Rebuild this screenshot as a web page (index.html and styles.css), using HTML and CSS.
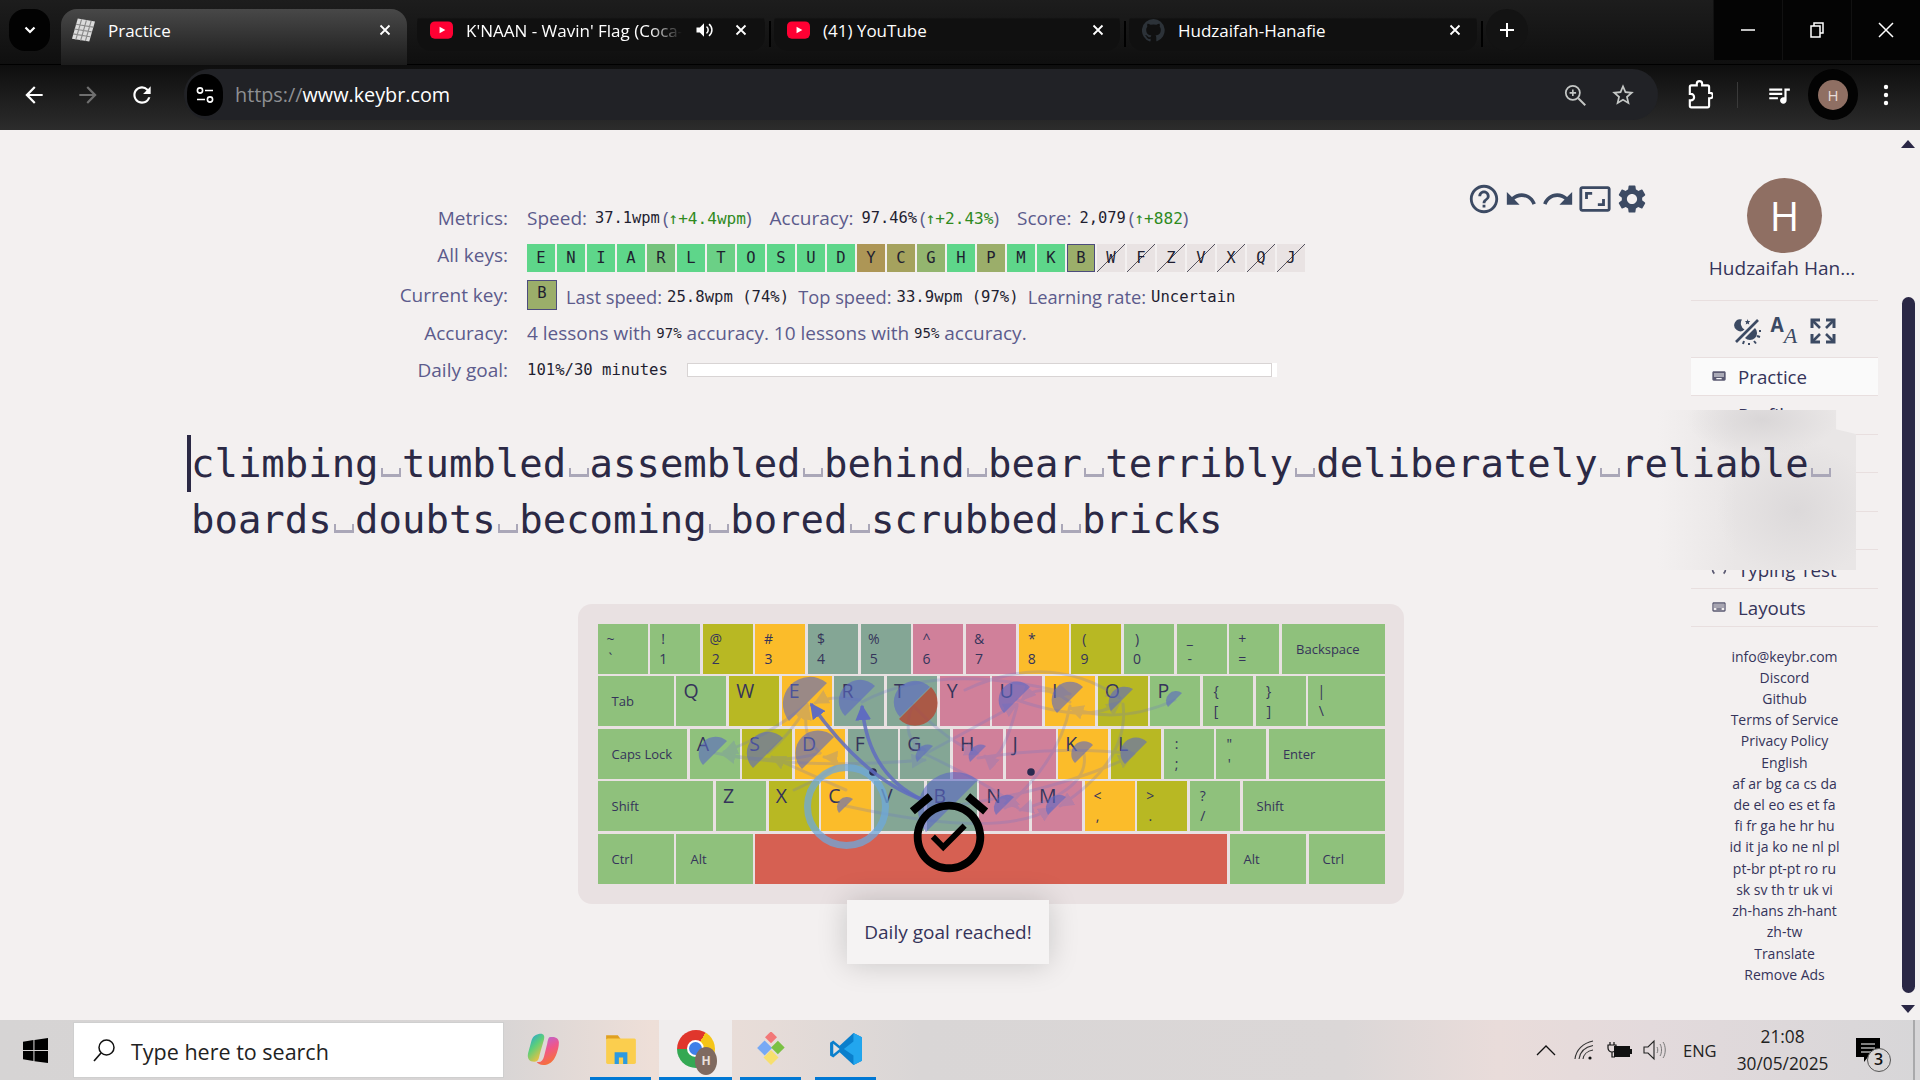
FILE: index.html
```html
<!DOCTYPE html>
<html lang="en">
<head>
<meta charset="utf-8">
<title>Practice</title>
<link rel="stylesheet" href="styles.css">
</head>
<body>
<svg class="defs" width="0" height="0"><defs>
  <marker id="ah" viewBox="0 0 10 10" refX="9" refY="5" markerWidth="5" markerHeight="5" orient="auto-start-reverse"><path d="M0 0L10 5L0 10z" fill="#6a74c8"/></marker>
  <marker id="as" viewBox="0 0 10 10" refX="9" refY="5" markerWidth="4.500" markerHeight="4.500" orient="auto-start-reverse"><path d="M0 0L10 5L0 10z" fill="#5f6cc0"/></marker>
  <linearGradient id="cop" x1="0" y1="0" x2=".6" y2="1"><stop offset="0" stop-color="#1e9be8"/><stop offset=".5" stop-color="#5ccf7a"/><stop offset="1" stop-color="#f4c03d"/></linearGradient>
  <linearGradient id="cop2" x1="0" y1="0" x2=".4" y2="1"><stop offset="0" stop-color="#a86be8"/><stop offset=".55" stop-color="#f0568a"/><stop offset="1" stop-color="#f5703c"/></linearGradient>
</defs></svg>

<header class="chrome">
  <div class="tabstrip">
    <div class="caret"><svg width="16" height="16" viewBox="0 0 16 16"><path d="M3.500 5.500L8 10l4.500-4.500" fill="none" stroke="#fff" stroke-width="2.200"/></svg></div>
    <div class="tab active">
      <svg class="fav" viewBox="0 0 24 24"><path d="M6 0L24 3L18 24L0 21z" fill="#dcdcdc"/><path d="M10 1L4 22M15 2L9 23M20 2.500L14 23.500M4 6L22 9M2.500 11L20.500 14M1 16L19 19" stroke="#8a8a8a" stroke-width="1.200"/></svg>
      <span class="tab-title">Practice</span>
      <svg class="x" viewBox="0 0 12 12"><path d="M1.500 1.500l9 9M10.500 1.500l-9 9" stroke="#fff" stroke-width="1.800"/></svg>
    </div>
    <div class="tab">
      <svg class="fav" viewBox="0 0 24 24"><rect y="3" width="24" height="18" rx="5" fill="#ff0033"/><path d="M10 8.500l6 3.500-6 3.500z" fill="#fff"/></svg>
      <span class="tab-title fade">K'NAAN - Wavin' Flag (Coca-Cola)</span>
      <svg class="spk" viewBox="0 0 24 24"><path d="M3 9v6h4l5 5V4L7 9z" fill="#fff"/><path d="M15 8c1.500 1 2 2.500 2 4s-.500 3-2 4M18 5c2.500 2 3.500 4.500 3.500 7s-1 5-3.500 7" fill="none" stroke="#fff" stroke-width="1.800"/></svg>
      <svg class="x" viewBox="0 0 12 12"><path d="M1.500 1.500l9 9M10.500 1.500l-9 9" stroke="#fff" stroke-width="1.800"/></svg>
    </div>
    <i class="sep"></i>
    <div class="tab">
      <svg class="fav" viewBox="0 0 24 24"><rect y="3" width="24" height="18" rx="5" fill="#ff0033"/><path d="M10 8.500l6 3.500-6 3.500z" fill="#fff"/></svg>
      <span class="tab-title">(41) YouTube</span>
      <svg class="x" viewBox="0 0 12 12"><path d="M1.500 1.500l9 9M10.500 1.500l-9 9" stroke="#fff" stroke-width="1.800"/></svg>
    </div>
    <i class="sep"></i>
    <div class="tab">
      <svg class="fav" viewBox="0 0 24 24"><path d="M12 .5a12 12 0 0 0-3.800 23.400c.6.100.8-.300.8-.600v-2.100c-3.300.700-4-1.600-4-1.600-.600-1.400-1.400-1.800-1.400-1.800-1.100-.700.100-.700.100-.700 1.200.100 1.900 1.200 1.900 1.200 1.100 1.800 2.800 1.300 3.500 1 .100-.800.400-1.300.800-1.600-2.700-.300-5.500-1.300-5.500-5.900 0-1.300.500-2.400 1.200-3.200-.100-.300-.500-1.500.100-3.200 0 0 1-.300 3.300 1.200a11.500 11.500 0 0 1 6 0c2.300-1.500 3.300-1.200 3.300-1.200.700 1.700.200 2.900.100 3.200.800.800 1.200 1.900 1.200 3.200 0 4.600-2.800 5.600-5.500 5.900.400.400.800 1.100.800 2.200v3.300c0 .300.200.700.800.600A12 12 0 0 0 12 .5z" fill="#2c3238"/></svg>
      <span class="tab-title">Hudzaifah-Hanafie</span>
      <svg class="x" viewBox="0 0 12 12"><path d="M1.500 1.500l9 9M10.500 1.500l-9 9" stroke="#fff" stroke-width="1.800"/></svg>
    </div>
    <i class="sep"></i>
    <div class="plus"><svg width="18" height="18" viewBox="0 0 18 18"><path d="M9 2v14M2 9h14" stroke="#fff" stroke-width="2"/></svg></div>
    <div class="winctl">
      <div class="wbtn"><svg width="14" height="14" viewBox="0 0 14 14"><path d="M0 7h14" stroke="#fff" stroke-width="1.500"/></svg></div>
      <div class="wbtn"><svg width="14" height="16" viewBox="0 0 14 16"><path d="M1 4h9v11H1zM4 4V1h9v10h-3" fill="none" stroke="#fff" stroke-width="1.500"/></svg></div>
      <div class="wbtn"><svg width="16" height="16" viewBox="0 0 16 16"><path d="M1 1l14 14M15 1L1 15" stroke="#fff" stroke-width="1.500"/></svg></div>
    </div>
  </div>
  <div class="toolbar">
    <svg class="tb back" viewBox="0 0 24 24"><path d="M20 11H7.830l5.590-5.590L12 4l-8 8 8 8 1.410-1.410L7.830 13H20v-2z" fill="#fff"/></svg>
    <svg class="tb fwd" viewBox="0 0 24 24"><path d="M12 4l-1.410 1.410L16.170 11H4v2h12.170l-5.580 5.590L12 20l8-8z" fill="#6f6f6f"/></svg>
    <svg class="tb reload" viewBox="0 0 24 24"><path d="M17.650 6.350A7.958 7.958 0 0 0 12 4c-4.420 0-7.990 3.580-7.990 8s3.570 8 7.990 8c3.730 0 6.840-2.550 7.730-6h-2.080A5.990 5.990 0 0 1 12 18c-3.310 0-6-2.690-6-6s2.690-6 6-6c1.660 0 3.140.690 4.220 1.780L13 11h7V4l-2.350 2.350z" fill="#fff"/></svg>
    <div class="omni">
      <div class="lock"><svg width="20" height="20" viewBox="0 0 20 20"><circle cx="5" cy="5.500" r="2.600" fill="none" stroke="#fff" stroke-width="1.600"/><path d="M10 5.500h8M2 14.500h8" stroke="#fff" stroke-width="1.600"/><circle cx="15" cy="14.500" r="2.600" fill="none" stroke="#fff" stroke-width="1.600"/></svg></div>
      <span class="url"><span class="url-dim">https://</span>www.keybr.com</span>
      <span class="omni-space"></span>
      <svg class="om-ic" viewBox="0 0 24 24"><circle cx="10" cy="10" r="6.500" fill="none" stroke="#c4c7c5" stroke-width="1.600"/><path d="M15 15l6.500 6.500" stroke="#c4c7c5" stroke-width="1.800"/><path d="M10 7v6M7 10h6" stroke="#c4c7c5" stroke-width="1.500"/></svg>
      <svg class="om-ic star" viewBox="0 0 24 24"><path d="M22 9.240l-7.190-.620L12 2 9.190 8.630 2 9.240l5.460 4.730L5.820 21 12 17.270 18.180 21l-1.630-7.030L22 9.240zM12 15.400l-3.760 2.270 1-4.280-3.320-2.880 4.380-.380L12 6.100l1.710 4.040 4.380.380-3.320 2.880 1 4.280L12 15.400z" fill="#c4c7c5"/></svg>
    </div>
    <svg class="ext" viewBox="0 0 24 28"><path d="M4 5h5V3.500a2.500 2.500 0 0 1 5 0V5h5a1.500 1.500 0 0 1 1.500 1.500V12h1a2.500 2.500 0 0 1 0 5h-1v7a1.500 1.500 0 0 1-1.500 1.500H4A1.500 1.500 0 0 1 2.500 24v-5h1a3 3 0 0 0 0-6h-1V6.500A1.500 1.500 0 0 1 4 5z" fill="none" stroke="#fff" stroke-width="2"/></svg>
    <i class="tb-div"></i>
    <svg class="media" viewBox="0 0 24 24"><path d="M15 6H3v2h12V6zm0 4H3v2h12v-2zM3 16h8v-2H3v2zM17 6v8.180c-.310-.110-.650-.180-1-.180-1.660 0-3 1.340-3 3s1.340 3 3 3 3-1.340 3-3V8h3V6h-5z" fill="#fff"/></svg>
    <div class="profile"><span class="profile-h">H</span></div>
    <svg class="dots" viewBox="0 0 6 24"><circle cx="3" cy="4" r="2.200" fill="#fff"/><circle cx="3" cy="12" r="2.200" fill="#fff"/><circle cx="3" cy="20" r="2.200" fill="#fff"/></svg>
  </div>
</header>

<div class="page">
  <main class="main">
    <div class="top">
      <div class="metrics">
        <div class="row"><span class="lbl">Metrics:</span>
          <div class="val"><span class="name">Speed:</span><b class="mono v1">37.1wpm</b><span class="par">(<b class="mono up">↑+4.4wpm</b>)</span><span class="name n2">Accuracy:</span><b class="mono v1">97.46%</b><span class="par">(<b class="mono up">↑+2.43%</b>)</span><span class="name n2">Score:</span><b class="mono v1">2,079</b><span class="par">(<b class="mono up">↑+882</b>)</span></div>
        </div>
        <div class="row"><span class="lbl">All keys:</span>
          <div class="val chips">
            <span class="chip c1">E</span><span class="chip c1">N</span><span class="chip c1">I</span><span class="chip c1">A</span><span class="chip c2">R</span><span class="chip c1">L</span><span class="chip c3">T</span><span class="chip c1">O</span><span class="chip c1">S</span><span class="chip c1">U</span><span class="chip c1">D</span><span class="chip c4">Y</span><span class="chip c5">C</span><span class="chip c6">G</span><span class="chip c1">H</span><span class="chip c7">P</span><span class="chip c1">M</span><span class="chip c1">K</span><span class="chip c7 cur">B</span><span class="chip off">W</span><span class="chip off">F</span><span class="chip off">Z</span><span class="chip off">V</span><span class="chip off">X</span><span class="chip off">Q</span><span class="chip off">J</span>
          </div>
        </div>
        <div class="row row-cur"><span class="lbl">Current key:</span>
          <div class="val"><span class="curkey">B</span><span class="name lift">Last speed:</span><b class="mono v2 lift">25.8wpm (74%)</b><span class="name n3 lift">Top speed:</span><b class="mono v2 lift">33.9wpm (97%)</b><span class="name n3 lift">Learning rate:</span><b class="mono v2 lift">Uncertain</b></div>
        </div>
        <div class="row"><span class="lbl">Accuracy:</span>
          <div class="val acc">4 lessons with <b class="mono sm">97%</b> accuracy. 10 lessons with <b class="mono sm">95%</b> accuracy.</div>
        </div>
        <div class="row"><span class="lbl">Daily goal:</span>
          <div class="val"><b class="mono goal">101%/30 minutes</b><span class="bar"></span><span class="bar-end"></span></div>
        </div>
      </div>
      <div class="tools">
        <svg class="t-ic" viewBox="0 0 24 24"><path d="M11 18h2v-2h-2v2zm1-16C6.480 2 2 6.480 2 12s4.480 10 10 10 10-4.480 10-10S17.520 2 12 2zm0 18c-4.410 0-8-3.590-8-8s3.590-8 8-8 8 3.590 8 8-3.590 8-8 8zm0-14c-2.210 0-4 1.790-4 4h2c0-1.100.900-2 2-2s2 .900 2 2c0 2-3 1.750-3 5h2c0-2.250 3-2.500 3-5 0-2.210-1.790-4-4-4z"/></svg>
        <svg class="t-ic" viewBox="0 0 24 24"><path d="M12.500 8c-2.650 0-5.050.990-6.900 2.600L2 7v9h9l-3.620-3.620c1.390-1.160 3.160-1.880 5.120-1.880 3.540 0 6.550 2.310 7.600 5.500l2.370-.780C21.080 11.030 17.150 8 12.500 8z"/></svg>
        <svg class="t-ic" viewBox="0 0 24 24"><path d="M18.400 10.600C16.550 8.990 14.150 8 11.500 8c-4.650 0-8.580 3.030-9.960 7.220L3.900 16c1.050-3.190 4.050-5.500 7.600-5.500 1.950 0 3.730.720 5.120 1.880L13 16h9V7l-3.600 3.600z"/></svg>
        <svg class="t-ic" viewBox="0 0 24 24"><path d="M19 12h-2v3h-3v2h5v-5zM7 9h3V7H5v5h2V9zm14-6H3c-1.100 0-2 .900-2 2v14c0 1.100.900 2 2 2h18c1.100 0 2-.900 2-2V5c0-1.100-.900-2-2-2zm0 16.010H3V4.990h18v14.020z"/></svg>
        <svg class="t-ic" viewBox="0 0 24 24"><path d="M19.140 12.940c.040-.300.060-.610.060-.940 0-.320-.020-.640-.070-.940l2.030-1.580a.49.49 0 0 0 .120-.610l-1.920-3.320a.488.488 0 0 0-.590-.220l-2.390.960c-.500-.380-1.030-.700-1.620-.940l-.360-2.540a.484.484 0 0 0-.480-.410h-3.840c-.240 0-.430.170-.470.410l-.360 2.540c-.590.240-1.130.570-1.620.940l-2.390-.960c-.220-.080-.470 0-.590.220L2.740 8.870c-.120.210-.080.470.120.610l2.030 1.580c-.050.300-.090.630-.090.940s.020.640.070.940l-2.030 1.580a.49.49 0 0 0-.120.610l1.920 3.320c.120.220.370.290.590.220l2.390-.960c.500.380 1.030.700 1.620.940l.360 2.540c.050.240.240.410.48.410h3.840c.240 0 .440-.170.470-.410l.360-2.540c.590-.240 1.130-.560 1.620-.940l2.390.960c.220.080.470 0 .590-.220l1.920-3.320c.120-.220.070-.470-.120-.610l-2.010-1.580zM12 15.600c-1.980 0-3.600-1.620-3.600-3.600s1.620-3.600 3.600-3.600 3.600 1.620 3.600 3.600-1.620 3.600-3.600 3.600z"/></svg>
      </div>
    </div>

    <div class="board">
      <i class="cursor"></i>
      <div class="board-text">climbing<span class="sp"> </span>tumbled<span class="sp"> </span>assembled<span class="sp"> </span>behind<span class="sp"> </span>bear<span class="sp"> </span>terribly<span class="sp"> </span>deliberately<span class="sp"> </span>reliable<span class="sp"> </span><br>boards<span class="sp"> </span>doubts<span class="sp"> </span>becoming<span class="sp"> </span>bored<span class="sp"> </span>scrubbed<span class="sp"> </span>bricks</div>
    </div>

    <div class="kbd">
      <div class="krow">
        <div class="k g sym"><span>~</span><span>`</span></div><div class="k g sym"><span>!</span><span>1</span></div><div class="k o sym"><span>@</span><span>2</span></div><div class="k y sym"><span>#</span><span>3</span></div><div class="k t sym"><span>$</span><span>4</span></div><div class="k t sym"><span>%</span><span>5</span></div><div class="k p sym"><span>^</span><span>6</span></div><div class="k p sym"><span>&amp;</span><span>7</span></div><div class="k y sym"><span>*</span><span>8</span></div><div class="k o sym"><span>(</span><span>9</span></div><div class="k g sym"><span>)</span><span>0</span></div><div class="k g sym"><span>_</span><span>-</span></div><div class="k g sym"><span>+</span><span>=</span></div><div class="k g fn u200">Backspace</div>
      </div>
      <div class="krow">
        <div class="k g fn u150">Tab</div><div class="k g let">Q</div><div class="k o let">W</div><div class="k y let">E</div><div class="k t let">R</div><div class="k t let">T</div><div class="k p let">Y</div><div class="k p let">U</div><div class="k y let">I</div><div class="k o let">O</div><div class="k g let">P</div><div class="k g sym"><span>{</span><span>[</span></div><div class="k g sym"><span>}</span><span>]</span></div><div class="k g sym u150"><span>|</span><span>\</span></div>
      </div>
      <div class="krow">
        <div class="k g fn u175">Caps Lock</div><div class="k g let">A</div><div class="k o let">S</div><div class="k y let">D</div><div class="k t let">F</div><div class="k t let">G</div><div class="k p let">H</div><div class="k p let">J</div><div class="k y let">K</div><div class="k o let">L</div><div class="k g sym"><span>:</span><span>;</span></div><div class="k g sym"><span>"</span><span>'</span></div><div class="k g fn u225">Enter</div>
      </div>
      <div class="krow">
        <div class="k g fn u225">Shift</div><div class="k g let">Z</div><div class="k o let">X</div><div class="k y let">C</div><div class="k t let">V</div><div class="k t let">B</div><div class="k p let">N</div><div class="k p let">M</div><div class="k y sym"><span>&lt;</span><span>,</span></div><div class="k o sym"><span>&gt;</span><span>.</span></div><div class="k g sym"><span>?</span><span>/</span></div><div class="k g fn u275">Shift</div>
      </div>
      <div class="krow">
        <div class="k g fn u150">Ctrl</div><div class="k g fn u150">Alt</div><div class="k r u900"></div><div class="k g fn u150">Alt</div><div class="k g fn u150">Ctrl</div>
      </div>

      <svg class="heat" viewBox="578 604 826 300" width="826" height="300">
        <g fill="none" stroke="#6a74c8" stroke-width="3" opacity=".24" stroke-linecap="round">
          <path marker-end="url(#ah)" d="M768 753Q790 735 807 706"/>
          <path marker-end="url(#ah)" d="M820 753Q800 735 808 706"/>
          <path marker-end="url(#ah)" d="M820 753Q780 765 722 754"/>
          <path marker-end="url(#ah)" d="M807 704Q770 735 724 752"/>
          <path marker-end="url(#ah)" d="M846 790Q800 770 772 757"/>
          <path marker-end="url(#ah)" d="M794 790Q860 760 824 757"/>
          <path marker-end="url(#ah)" d="M860 700Q830 695 815 703"/>
          <path marker-end="url(#ah)" d="M912 704Q945 740 978 754"/>
          <path marker-end="url(#ah)" d="M925 754Q960 735 1017 704"/>
          <path marker-end="url(#ah)" d="M1070 702Q1040 680 1022 700"/>
          <path marker-end="url(#ah)" d="M862 702Q940 660 1070 694"/>
          <path marker-end="url(#ah)" d="M1017 700Q1090 725 1120 702"/>
          <path marker-end="url(#ah)" d="M1175 700Q1120 725 1070 708"/>
          <path marker-end="url(#ah)" d="M978 758Q1060 745 1134 754"/>
          <path marker-end="url(#ah)" d="M952 806Q1060 790 1132 756"/>
          <path marker-end="url(#ah)" d="M925 754Q1000 790 1018 808"/>
          <path marker-end="url(#ah)" d="M1084 754Q1090 790 1020 810"/>
          <path marker-end="url(#ah)" d="M1123 704Q1130 760 1060 806"/>
          <path marker-end="url(#ah)" d="M1070 706Q1060 760 1005 808"/>
          <path marker-end="url(#ah)" d="M912 706Q900 740 925 750"/>
          <path marker-end="url(#ah)" d="M1017 706Q1000 770 985 756"/>
          <path marker-end="url(#ah)" d="M846 806Q1000 840 1052 808"/>
          <path marker-end="url(#ah)" d="M715 753Q800 770 925 760"/>
          <path marker-end="url(#ah)" d="M965 690Q1050 650 1120 698"/>
        </g>
        <g fill="#5a68c4" fill-opacity=".6">
          <path d="M789 721A27 27 0 0 1 827 683Z"/>
          <path d="M845 716A21 21 0 0 1 875 686Z"/>
          <path d="M900 717A21 21 0 0 1 930 687Z"/>
          <path d="M1004 713A18 18 0 0 1 1030 687Z"/>
          <path d="M1057 713A18 18 0 0 1 1083 687Z"/>
          <path d="M1111 711A16 16 0 0 1 1133 689Z"/>
          <path d="M1168 707A10 10 0 0 1 1182 693Z"/>
          <path d="M703 765A17 17 0 0 1 727 741Z"/>
          <path d="M753 768A21 21 0 0 1 783 738Z"/>
          <path d="M802 769A22 22 0 0 1 834 737Z"/>
          <path d="M917 762A12 12 0 0 1 933 746Z"/>
          <path d="M970 762A12 12 0 0 1 986 746Z"/>
          <path d="M1075 763A12 12 0 0 1 1093 745Z"/>
          <path d="M1125 764A15 15 0 0 1 1147 742Z"/>
          <path d="M996 815A13 13 0 0 1 1014 797Z"/>
          <path d="M1048 815A13 13 0 0 1 1066 797Z"/>
          <path d="M839 813A10 10 0 0 1 853 799Z"/>
          <path d="M926 832A37 37 0 0 1 978 780Z"/>
        </g>
        <path d="M899 719A22 22 0 0 0 931 687Z" fill="#b93c28" fill-opacity=".72"/>
        <circle cx="846.500" cy="806.500" r="39" fill="none" stroke="#6ea8dc" stroke-width="7" stroke-opacity=".75"/>
        <circle cx="873" cy="772" r="3.800" fill="#2a2a50"/>
        <circle cx="1031" cy="772" r="3.800" fill="#2a2a50"/>
        <g fill="none" stroke="#5f6cc0" stroke-width="3.500" stroke-opacity=".85">
          <path marker-end="url(#as)" d="M923 800Q868 775 862 706"/>
          <path marker-end="url(#as)" d="M923 800Q865 780 811 704"/>
        </g>
      </svg>
      <svg class="alarm" viewBox="0 0 24 24"><path d="M22 5.720l-4.600-3.860-1.290 1.530 4.600 3.860L22 5.720zM7.880 3.390L6.600 1.860 2 5.710l1.290 1.530 4.590-3.850zM12 4c-4.970 0-9 4.030-9 9s4.030 9 9 9 9-4.030 9-9-4.030-9-9-9zm0 16c-3.870 0-7-3.130-7-7s3.130-7 7-7 7 3.130 7 7-3.130 7-7 7zm-1.460-5.470L8.410 12.400l-1.060 1.060 3.180 3.180 6-6-1.060-1.060-4.930 4.950z"/></svg>
      <div class="toast">Daily goal reached!</div>
    </div>
  </main>

  <aside class="side">
    <div class="avatar">H</div>
    <div class="uname">Hudzaifah Han...</div>
    <div class="side-icons">
      <svg class="si" viewBox="0 0 28 28"><path d="M3 25L25 3" stroke="#3c4a63" stroke-width="2.600"/><path d="M9 2.500a6 6 0 1 0 2.500 10 7 7 0 0 1-2.500-10z" fill="#3c4a63"/><path d="M12 21a7 7 0 0 0 10-10z" fill="#3c4a63"/><path d="M14.500 2l.8 1.900 2 .2-1.500 1.400.400 2-1.700-1-1.800 1 .5-2L12 4.100l2-.2z" fill="#3c4a63"/><path d="M11 24l-1 3M16 26v2M21 24l2 2.500M24 19l3 1M26 14h2" stroke="#3c4a63" stroke-width="2"/></svg>
      <span class="fontic"><b class="fa">A</b><i class="fb">A</i></span>
      <svg class="si" viewBox="0 0 28 28"><path d="M3 11V3h8M17 3h8v8M25 17v8h-8M11 25H3v-8" fill="none" stroke="#3c4a63" stroke-width="3"/><path d="M4 4l7 7M24 4l-7 7M24 24l-7-7M4 24l7-7" stroke="#3c4a63" stroke-width="2.600"/></svg>
    </div>
    <nav class="nav">
      <a class="nav-item on"><svg class="ni" viewBox="0 0 24 24"><path d="M20 5H4c-1.100 0-1.990.900-1.990 2L2 17c0 1.100.900 2 2 2h16c1.100 0 2-.900 2-2V7c0-1.100-.900-2-2-2zm-9 3h2v2h-2V8zm0 3h2v2h-2v-2zM8 8h2v2H8V8zm0 3h2v2H8v-2zm-1 2H5v-2h2v2zm0-3H5V8h2v2zm9 7H8v-2h8v2zm0-4h-2v-2h2v2zm0-3h-2V8h2v2zm3 3h-2v-2h2v2zm0-3h-2V8h2v2z"/></svg>Practice</a>
      <a class="nav-item"><svg class="ni line" viewBox="0 0 24 24"><path d="M4 20V6M13 20V6M17 20l4-14"/></svg>Profile</a>
      <a class="nav-item"></a>
      <a class="nav-item"></a>
      <a class="nav-item"></a>
      <a class="nav-item"><svg class="ni line" viewBox="0 0 24 24"><path d="M5 5a10 10 0 0 0 0 14M19 5a10 10 0 0 1 0 14M9 12h6"/></svg>Typing Test</a>
      <a class="nav-item"><svg class="ni" viewBox="0 0 24 24"><path d="M20 5H4c-1.100 0-1.990.900-1.990 2L2 17c0 1.100.900 2 2 2h16c1.100 0 2-.900 2-2V7c0-1.100-.900-2-2-2zM4 7h16v10H4zm1 1h2v2H5zm3 0h2v2H8zm3 0h2v2h-2zm3 0h2v2h-2zm3 0h2v2h-2zM5 11h2v2H5zm3 0h2v2H8zm3 0h2v2h-2zm3 0h2v2h-2zm3 0h2v2h-2zM8 14h8v2H8z" fill-rule="evenodd"/></svg>Layouts</a>
    </nav>
    <div class="patch"></div>
    <div class="foot">
      <div>info@keybr.com</div><div>Discord</div><div>Github</div><div>Terms of Service</div><div>Privacy Policy</div><div>English</div><div>af ar bg ca cs da</div><div>de el eo es et fa</div><div>fi fr ga he hr hu</div><div>id it ja ko ne nl pl</div><div>pt-br pt-pt ro ru</div><div>sk sv th tr uk vi</div><div>zh-hans zh-hant</div><div>zh-tw</div><div>Translate</div><div>Remove Ads</div>
    </div>
  </aside>

  <div class="scroll">
    <i class="arrow-up"></i>
    <i class="thumb"></i>
    <i class="arrow-down"></i>
  </div>
</div>

<footer class="taskbar">
  <svg class="win" viewBox="0 0 24 24"><path d="M0 3.500L10 2v9.500H0zM11 1.800L24 0v11.500H11zM0 12.500h10V22L0 20.500zM11 12.500h13V24l-13-1.800z" fill="#000"/></svg>
  <div class="search">
    <svg class="mag" viewBox="0 0 24 24"><circle cx="14.500" cy="9.500" r="7.500" fill="none" stroke="#111" stroke-width="1.500"/><path d="M9 15L2 23" stroke="#111" stroke-width="1.600"/></svg>
    <span class="search-text">Type here to search</span>
  </div>
  <div class="apps">
    <div class="app"><svg class="appic" viewBox="0 0 32 32"><path d="M11 1c4-1 6 1 5 5l-4 14c-1 4-1 7-5 7-5 0-7-3-6-8l3-11c1-4 3-6 7-7z" fill="url(#cop)"/><path d="M21 4c4-1 9 0 9 5 0 4-1 7-2 10-2 6-5 10-11 11-4 .500-7-1-8-3 4 1 6-1 7-5l3-12c.500-3 1-5 2-6z" fill="url(#cop2)"/></svg></div>
    <div class="app run"><svg class="appic" viewBox="0 0 32 32"><path d="M2 3h11l3 4h-14z" fill="#e0a020"/><rect x="2" y="6" width="28" height="24" rx="1.500" fill="#fbce4e"/><path d="M10 30V19h12v11h-4v-6h-4v6z" fill="#2c9ae0"/></svg></div>
    <div class="app run app-cur"><span class="chromeic"><span class="chromedot"></span></span><span class="chromeh">H</span></div>
    <div class="app run"><svg class="appic" viewBox="0 0 32 32"><rect x="12" y="1" width="8" height="8" transform="rotate(45 16 5)" fill="#f27878"/><rect x="5" y="10" width="10" height="10" transform="rotate(45 10 15)" fill="#76a9f5"/><rect x="18" y="10" width="9" height="9" transform="rotate(45 22.500 14.500)" fill="#7ac143"/><rect x="11" y="19" width="10" height="10" transform="rotate(45 16 24)" fill="#f7df6e"/></svg></div>
    <div class="app run"><svg class="appic" viewBox="0 0 32 32"><path d="M23 1l8 4v22l-8 4-13-12-6 5-3-2v-12l3-2 6 5z" fill="#0a7fcc"/><path d="M23 1l8 4v22l-8 4V22l-9-6 9-7z" fill="#22a6ee"/><path d="M4 11l6 5-6 5z" fill="#e4e1e1"/></svg></div>
  </div>
  <div class="tray">
    <svg class="ti chev" viewBox="0 0 20 12"><path d="M1 11l9-9 9 9" fill="none" stroke="#111" stroke-width="1.300"/></svg>
    <svg class="ti wifi" viewBox="0 0 22 22"><path d="M2 20C3 11 10 4 20 2M6 20C7 13 12 8 20 6.500M10 20c.500-4 4-8 10-9" fill="none" stroke="#333" stroke-width="1.100"/><circle cx="17" cy="19" r="1.600" fill="#111"/></svg>
    <svg class="ti batt" viewBox="0 0 26 18"><path d="M4 1v3M8 1v3M2 4h8v3a4 4 0 0 1-8 0zM6 11v5h3" fill="none" stroke="#111" stroke-width="1.200"/><rect x="8" y="5" width="16" height="11" fill="#111"/><rect x="24" y="8" width="2" height="5" fill="#111"/></svg>
    <svg class="ti vol" viewBox="0 0 24 22"><path d="M1 8h4l6-6v18l-6-6H1z" fill="none" stroke="#222" stroke-width="1.100"/><path d="M14 8c1 1.500 1 4.500 0 6M17 5c2 3 2 9 0 12M20 3c3 4 3 12 0 16" fill="none" stroke="#777" stroke-width="1"/></svg>
    <span class="eng">ENG</span>
    <div class="clock"><span>21:08</span><span>30/05/2025</span></div>
    <div class="notif">
      <svg class="nbub" viewBox="0 0 24 24"><path d="M0 0h24v19H12l-4 5v-5H0z" fill="#000"/><path d="M5 6h14M5 10h14M5 14h10" stroke="#fff" stroke-width="1"/></svg>
      <span class="nbadge">3</span>
    </div>
    <i class="show-desk"></i>
  </div>
</footer>
</body>
</html>
```
FILE: styles.css
```css
* { box-sizing: border-box; }
html, body { margin: 0; height: 1080px; width: 1920px; overflow: hidden; }
body { display: flex; flex-direction: column; background: #f3f0f0; font-family: "Open Sans", sans-serif; color: #2b2945; }
.defs { position: absolute; }
b { font-weight: 400; }

/* browser chrome */
.chrome { flex: 0 0 130px; display: flex; flex-direction: column; background: #000; }
.tabstrip { height: 65px; display: flex; align-items: flex-start; background: linear-gradient(#1d1d1d, #0f0f0f); padding-left: 9px; position: relative; border-bottom: 1px solid #000; }
.caret { width: 41px; height: 42px; margin-top: 9px; border-radius: 16px; background: #020202; display: flex; align-items: center; justify-content: center; margin-right: 11px; }
.tab { width: 348px; height: 42px; margin-top: 9px; background: linear-gradient(transparent 20%, #101010 24%); border-radius: 14px; display: flex; align-items: center; padding: 0 16px 0 13px; color: #fff; font-size: 17px; margin-right: 4px; flex: none; }
.tab.active { width: 346px; height: 56px; margin-top: 9px; margin-right: 10px; border-radius: 16px 16px 0 0; background: linear-gradient(#484848, #1c1c1c); padding-bottom: 14px; padding-left: 11px; }
.tab:nth-of-type(4) { width: 346px; }
.fav { width: 23px; height: 24px; flex: none; margin-right: 13px; }
.tab-title { flex: 1; white-space: nowrap; overflow: hidden; font-size: 17px; min-width: 0; }
.fade { -webkit-mask-image: linear-gradient(to right, #000 85%, transparent 100%); mask-image: linear-gradient(to right, #000 85%, transparent 100%); }
.x { width: 12px; height: 12px; flex: none; margin-left: 18px; }
.spk { width: 20px; height: 20px; flex: none; margin-left: 12px; }
.spk + .x { margin-left: 21px; margin-right: 2px; }
.sep { width: 2px; height: 26px; margin-top: 21px; background: #000; margin-right: 3px; flex: none; }
.plus { width: 42px; height: 42px; margin-top: 9px; border-radius: 50%; background: #131313; display: flex; align-items: center; justify-content: center; }
.winctl { margin-left: auto; display: flex; height: 60px; background: #040404; }
.wbtn { width: 69px; display: flex; align-items: center; justify-content: center; border-left: 1px solid #111; }
.toolbar { height: 65px; display: flex; align-items: center; background: linear-gradient(#0e0e0e, #2c2c2c); padding: 0 0 6px 21px; }
.tb { width: 26px; height: 26px; flex: none; margin-right: 28px; }
.tb.reload { margin-right: 0; }
.omni { width: 1474px; height: 51px; margin-left: 29px; background: #212226; border-radius: 26px; display: flex; align-items: center; padding-left: 3px; flex: none; }
.lock { width: 36px; height: 42px; border-radius: 21px; background: #000; display: flex; align-items: center; justify-content: center; }
.url { margin-left: 12px; font-size: 19.800px; color: #fff; }
.url-dim { color: #8e9093; }
.omni-space { flex: 1; }
.om-ic { width: 26px; height: 26px; }
.om-ic.star { margin-left: 22px; margin-right: 22px; }
.ext { width: 26px; height: 30px; margin-left: 29px; flex: none; }
.tb-div { width: 1px; height: 26px; background: #3a3a3a; margin-left: 24px; flex: none; }
.media { width: 26px; height: 26px; margin-left: 28px; flex: none; }
.profile { width: 50px; height: 51px; margin-left: 16px; border-radius: 25px; background: #030303; display: flex; align-items: center; justify-content: center; flex: none; }
.profile-h { width: 30px; height: 30px; border-radius: 50%; background: #8f6f63; color: #e8dcd8; font-size: 15px; line-height: 30px; text-align: center; }
.dots { width: 6px; height: 24px; margin-left: 25px; flex: none; }

/* page */
.page { flex: 0 0 890px; display: flex; overflow: hidden; }
.main { flex: 0 0 1691px; padding-top: 54px; }
.top { display: flex; justify-content: space-between; align-items: flex-start; padding: 0 44px 0 330px; }
.metrics { margin-top: 16px; display: flex; flex-direction: column; gap: 1px; }
.row { height: 36px; display: flex; align-items: center; }
.row-cur { margin-top: 3px; margin-bottom: 1px; }
.lbl { width: 178px; text-align: right; font-size: 19px; color: #5c5b8c; margin-right: 19px; flex: none; }
.val { display: flex; align-items: center; font-size: 19px; color: #5c5b8c; white-space: pre; }
.row-cur .name { font-size: 18.300px; }
.mono { font-family: "DejaVu Sans Mono", monospace; color: #1f1e30; }
.v1 { font-size: 15.400px; margin-left: 8px; margin-right: 3px; }
.par { display: inline-flex; align-items: center; }
.up { font-size: 16.100px; color: #2f8a1e; }
.n2 { margin-left: 18px; }
.n3 { margin-left: 9px; }
.v2 { font-size: 15.600px; margin-left: 5px; }
.lift { margin-top: 3px; }
.chips { gap: 2px; margin-top: 5px; }
.chip { width: 28px; height: 28px; font: 15.500px/28px "DejaVu Sans Mono", monospace; color: #1f1e30; text-align: center; }
.c1 { background: #5ed68a; }
.c2 { background: #75c37c; }
.c3 { background: #6bd086; }
.c4 { background: #ad9656; }
.c5 { background: #a5a25e; }
.c6 { background: #93b56f; }
.c7 { background: #9bae6a; }
.cur { outline: 1.500px solid #4c4c7c; outline-offset: -1px; }
.off { background: linear-gradient(to bottom right, transparent calc(50% - .7px), #55535f 50%, transparent calc(50% + .7px)), #e9e3e3; }
.curkey { width: 30px; height: 30px; border: 1.500px solid #4c4c7c; background: #9bae6a; font: 15.500px/25px "DejaVu Sans Mono", monospace; color: #1f1e30; text-align: center; margin-right: 9px; }
.sm { font-size: 14px; }
.goal { font-size: 15.600px; }
.bar { width: 585px; height: 14px; margin-left: 19px; background: #fff; border: 1px solid #d8d4d4; }
.bar-end { width: 5px; height: 14px; background: #fff; }
.tools { display: flex; align-items: center; height: 30px; margin-right: -2px; }
.t-ic { width: 34px; height: 34px; fill: #3c4a63; flex: none; margin-right: 3px; }
.t-ic:last-child { margin-right: 0; }

.board { margin-top: 48px; margin-left: 187px; display: flex; position: relative; z-index: 2; width: 1px; }
.cursor { flex: none; width: 4px; height: 57px; background: #2b2945; margin-top: -1px; }
.board-text { font: 38.950px/56px "DejaVu Sans Mono", monospace; color: #2b2945; white-space: nowrap; }
.sp { position: relative; white-space: pre; }
.sp::after { content: ""; position: absolute; left: 2.500px; width: 16px; bottom: 9px; height: 6px; border: solid #aaa7b8; border-width: 0 2px 3px; }

/* keyboard */
.kbd { position: relative; width: 826px; height: 300px; margin: 56px 0 0 578px; padding: 19.500px; background: #e9e1e2; border-radius: 14px; display: flex; flex-direction: column; gap: 2.670px; }
.krow { display: flex; gap: 2.670px; height: 50px; }
.k { flex: 0 0 50px; height: 50px; font-size: 14px; color: #35345a; }
.g { background: #8fc17c; }
.o { background: #b8b823; }
.y { background: #fbbc2a; }
.t { background: #84a695; }
.p { background: #d0809a; }
.r { background: #d66052; }
.let { font-size: 19.500px; line-height: 22px; padding: 4px 0 0 7px; }
.sym { display: flex; flex-direction: column; padding-top: 5px; line-height: 20px; }
.sym span { width: 26px; text-align: center; }
.fn { display: flex; align-items: center; font-size: 13px; padding-left: 14px; }
.u150 { flex-basis: 76.330px; }
.u175 { flex-basis: 89.500px; }
.u200 { flex-basis: 102.670px; }
.u225 { flex-basis: 115.830px; }
.u275 { flex-basis: 142.170px; }
.u900 { flex-basis: 471.400px; }
.heat { position: absolute; left: 0; top: 0; }
.alarm { position: absolute; left: 324px; top: 182px; width: 94px; height: 94px; fill: #000; }
.toast { position: absolute; left: 269px; top: 296px; width: 202px; height: 64px; background: #f5f3f3; display: flex; align-items: center; justify-content: center; font-size: 19px; color: #35345a; box-shadow: 0 0 30px rgba(0, 0, 0, .18); }

/* sidebar */
.side { flex: 0 0 187px; position: relative; display: flex; flex-direction: column; align-items: stretch; padding-top: 48px; }
.avatar { width: 75px; height: 75px; border-radius: 50%; background: #8f6f63; color: #fff; font-size: 40px; line-height: 75px; text-align: center; align-self: center; flex: none; }
.uname { margin-top: 2px; padding-right: 5px; font-size: 19px; line-height: 26px; text-align: center; color: #35345a; white-space: nowrap; }
.side-icons { margin-top: 18.500px; padding-top: 16px; height: 57px; border-top: 1px solid #e8dfdf; display: flex; justify-content: center; gap: 10px; }
.si { width: 28px; height: 28px; }
.fontic { display: flex; width: 28px; height: 28px; color: #3c4a63; }
.fa { font: 700 22px/20px "Liberation Mono", monospace; }
.fb { font: italic 22px/20px "Liberation Serif", serif; margin-top: 9px; }
.nav { display: flex; flex-direction: column; }
.nav-item { height: 38.600px; display: flex; align-items: center; padding-left: 20px; font-size: 18.700px; color: #35345a; border-top: 1px solid #e8dfdf; gap: 11px; }
.nav-item:last-child { border-bottom: 1px solid #e8dfdf; }
.nav-item.on { background: #fafafa; }
.ni { width: 16px; height: 16px; fill: #5b5a72; flex: none; }
.ni.line { fill: none; stroke: #5b5a72; stroke-width: 2.500; }
.patch { position: absolute; left: -34px; top: 280px; width: 199px; height: 160px; z-index: 1; clip-path: polygon(0 0, 90% 0, 90% 12%, 100% 15%, 100% 100%, 0 100%); background: radial-gradient(ellipse 75px 35px at 105px 10px, #d9d6d7, rgba(217, 214, 215, 0)), radial-gradient(ellipse 80px 70px at 140px 100px, #dcd9da, rgba(220, 217, 218, 0)), linear-gradient(to right, #f3f0f0, #e9e6e6 40%); }
.foot { margin-top: 19px; font-size: 14px; line-height: 21.200px; text-align: center; color: #35345a; }

.scroll { flex: 1; display: flex; flex-direction: column; padding-left: 24px; }
.arrow-up { width: 0; height: 0; margin-top: 10px; margin-left: -1px; border-left: 7.500px solid transparent; border-right: 7.500px solid transparent; border-bottom: 8px solid #2a2745; }
.thumb { width: 13px; height: 696px; margin-top: 149px; background: #2a2745; border-radius: 7px; }
.arrow-down { width: 0; height: 0; margin-top: 12px; margin-left: -1px; border-left: 7.500px solid transparent; border-right: 7.500px solid transparent; border-top: 8px solid #2a2745; }

/* taskbar */
.taskbar { flex: 0 0 60px; display: flex; align-items: stretch; background: linear-gradient(to right, #d6d4d4 0, #d8d5d5 26%, #eedfd8 34%, #e6dcd8 40%, #d9d6d6 48%, #dbd7d7 70%, #e9dcda 78%, #e3dadc 86%, #d7d6d8 100%); }
.win { width: 25px; height: 25px; margin: 18px 25px 0 23px; flex: none; }
.search { width: 431px; height: 56px; margin-top: 2px; background: #fff; border: 1px solid #cfcfcf; display: flex; align-items: center; padding-left: 18px; flex: none; }
.mag { width: 24px; height: 26px; }
.search-text { margin-left: 15px; margin-top: 2px; font-size: 21.500px; color: #222; }
.apps { display: flex; margin-left: 8px; flex: none; }
.app { display: flex; align-items: center; justify-content: center; position: relative; width: 72px; height: 60px; flex: none; }
.app:nth-child(1) { width: 63px; margin-right: 15px; }
.app:nth-child(2) { width: 61px; margin-right: 8px; }
.app:nth-child(3) { width: 73px; margin-right: 8px; }
.app:nth-child(4) { width: 61px; margin-right: 14px; }
.app:nth-child(5) { width: 61px; }
.run { border-bottom: 3px solid #0078d4; }
.app-cur { background: #f0eded; }
.appic { width: 34px; height: 34px; }
.chromeic { width: 38px; height: 38px; border-radius: 50%; background: conic-gradient(from 30deg, #f5c518 0 120deg, #34a853 120deg 240deg, #e0362c 240deg 360deg); display: flex; align-items: center; justify-content: center; }
.chromedot { width: 17px; height: 17px; border-radius: 50%; background: #3f7fe8; border: 2px solid #fff; }
.chromeh { position: absolute; left: 36px; top: 27px; width: 22px; height: 28px; border-radius: 50%; background: #7f6a60; color: #e9e0dc; font-size: 12px; font-weight: 700; line-height: 28px; text-align: center; }
.tray { margin-left: auto; display: flex; align-items: center; position: relative; width: 390px; flex: none; }
.ti { flex: none; }
.chev { width: 20px; height: 12px; margin-left: 6px; }
.wifi { width: 22px; height: 22px; margin-left: 17px; }
.batt { width: 26px; height: 18px; margin-left: 11px; }
.vol { width: 24px; height: 22px; margin-left: 11px; }
.eng { margin-left: 16px; font-size: 16.500px; color: #222; }
.clock { width: 100px; margin-left: 16px; display: flex; flex-direction: column; align-items: center; font-size: 17.300px; line-height: 27px; color: #222; }
.notif { position: relative; width: 24px; height: 24px; margin-left: 23px; }
.nbub { width: 24px; height: 24px; display: block; }
.nbadge { position: absolute; left: 11px; top: 10px; width: 24px; height: 24px; border-radius: 50%; background: #d9d6d6; border: 1px solid #555; font-size: 16px; font-weight: 600; line-height: 21px; text-align: center; color: #111; }
.show-desk { position: absolute; right: 5px; top: 0; width: 2px; height: 60px; background: #a9a9ab; }
```
